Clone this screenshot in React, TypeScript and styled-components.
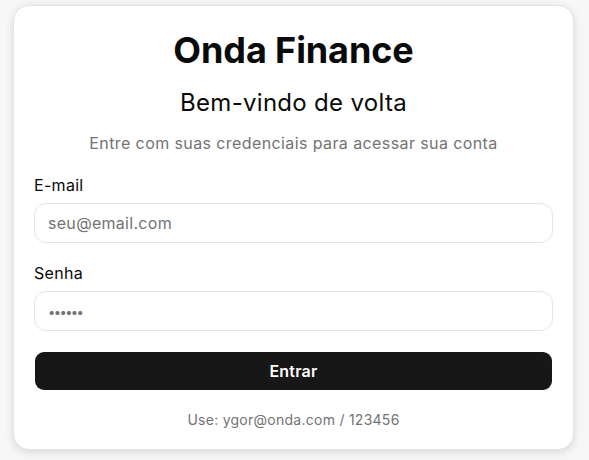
import React from "react";
import styled, { createGlobalStyle } from "styled-components";

const GlobalStyle = createGlobalStyle`
  * {
    box-sizing: border-box;
  }
  body {
    margin: 0;
    background-color: #f7f7f7;
    font-family: Inter, "Liberation Sans", sans-serif;
    color: #0a0a0a;
  }
`;

const Page = styled.div`
  padding: 5px 15px 10px 13px;
`;

const Card = styled.div`
  background-color: #ffffff;
  border: 1px solid #e5e5e5;
  border-radius: 16px;
  box-shadow: 0 2px 8px rgba(0, 0, 0, 0.13);
  padding: 24px 20px 19px;
  display: flex;
  flex-direction: column;
`;

const Header = styled.div`
  display: flex;
  flex-direction: column;
  align-items: center;
  text-align: center;
`;

const Brand = styled.h1`
  margin: 0;
  font-size: 36px;
  line-height: 40px;
  font-weight: 700;
  letter-spacing: -0.1px;
`;

const Title = styled.h2`
  margin: 17px 0 0;
  font-size: 24px;
  line-height: 32px;
  font-weight: 400;
  letter-spacing: 0.3px;
`;

const Subtitle = styled.p`
  margin: 12px 0 0;
  font-size: 16px;
  line-height: 24px;
  color: #737373;
  letter-spacing: 0.4px;
`;

const Form = styled.form`
  margin-top: 20px;
  display: flex;
  flex-direction: column;
  gap: 20px;
`;

const Field = styled.div`
  display: flex;
  flex-direction: column;
  gap: 8px;
`;

const Label = styled.label`
  font-size: 16px;
  line-height: 20px;
  font-weight: 400;
  letter-spacing: 0.3px;
`;

const Input = styled.input<{ $secret?: boolean }>`
  height: 40px;
  width: 100%;
  border: 1px solid #e5e5e5;
  border-radius: 12px;
  padding: 0 13px;
  font-family: inherit;
  font-size: 16px;
  letter-spacing: 0.3px;
  color: #0a0a0a;
  background: #ffffff;

  &::placeholder {
    color: #737373;
    font-size: ${p => (p.$secret ? "13px" : "16px")};
    letter-spacing: ${p => (p.$secret ? "-1.6px" : "0.3px")};
  }

  &:focus {
    outline: none;
  }
`;

const Button = styled.button`
  height: 38px;
  margin: 1px 1px 0;
  border: none;
  border-radius: 9px;
  background-color: #171717;
  color: #ffffff;
  font-family: inherit;
  font-size: 16px;
  font-weight: 600;
  letter-spacing: 0.2px;
  cursor: pointer;
`;

const Hint = styled.p`
  margin: 20px 0 0;
  text-align: center;
  font-size: 14px;
  line-height: 20px;
  color: #737373;
  letter-spacing: 0.26px;
`;

const App = () => {
  return (
    <Page>
      <GlobalStyle />
      <Card>
        <Header>
          <Brand>Onda Finance</Brand>
          <Title>Bem-vindo de volta</Title>
          <Subtitle>Entre com suas credenciais para acessar sua conta</Subtitle>
        </Header>
        <Form onSubmit={e => e.preventDefault()}>
          <Field>
            <Label htmlFor="email">E-mail</Label>
            <Input id="email" type="email" placeholder="seu@email.com" />
          </Field>
          <Field>
            <Label htmlFor="senha">Senha</Label>
            <Input id="senha" type="password" placeholder="••••••" $secret />
          </Field>
          <Button type="submit">Entrar</Button>
        </Form>
        <Hint>Use: ygor@onda.com / 123456</Hint>
      </Card>
    </Page>
  );
};

export default App;
